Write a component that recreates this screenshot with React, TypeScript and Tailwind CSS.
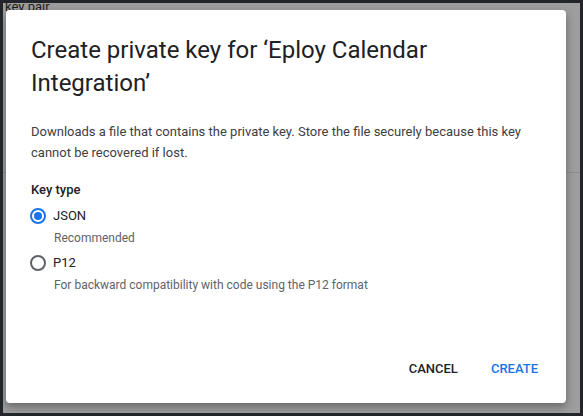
import { useState } from 'react'

type KeyType = 'json' | 'p12'

const options: { id: KeyType; label: string; hint: string }[] = [
  { id: 'json', label: 'JSON', hint: 'Recommended' },
  { id: 'p12', label: 'P12', hint: 'For backward compatibility with code using the P12 format' },
]

function Radio({ checked }: { checked: boolean }) {
  return (
    <span
      className={`ml-[-1px] flex h-[16px] w-[16px] shrink-0 items-center justify-center rounded-full border-2 ${
        checked ? 'border-[#1a73e8]' : 'border-[#5f6368]'
      }`}
    >
      {checked && <span className="h-[8px] w-[8px] rounded-full bg-[#1a73e8]" />}
    </span>
  )
}

export default function App() {
  const [keyType, setKeyType] = useState<KeyType>('json')

  return (
    <div className="h-[416px] w-[583px] bg-[#22262b] p-[3px] font-['Roboto',sans-serif]">
      <div className="relative h-full w-full overflow-hidden bg-[#9e9e9e] pb-[10px] pl-[3px] pr-[14px] pt-[7px]">
        {/* page content behind the overlay */}
        <div className="absolute left-[2px] top-[-4px] text-[13px] leading-[16px] text-[#1d1d1d]">key pair</div>
        <div className="absolute left-0 right-0 top-[169px] h-px bg-[#8e8e8e]" />

        <div className="relative flex h-full flex-col rounded-[4px] bg-white px-[25px] pb-[16px] pt-[24px] shadow-[0_4px_10px_rgba(0,0,0,0.35)]">
          <h2 className="text-[24px] leading-[33px] text-[#202124]">
            Create private key for ‘Eploy Calendar Integration’
          </h2>

          <p className="mt-[21px] pr-[20px] text-[13px] leading-[21px] text-[#3c4043]">
            Downloads a file that contains the private key. Store the file securely because this key
            cannot be recovered if lost.
          </p>

          <div className="mt-[17px] text-[13px] font-medium leading-[20px] text-[#202124]">Key type</div>

          <div className="mt-[4px] flex flex-col">
            {options.map((o, i) => (
              <label
                key={o.id}
                className={`flex cursor-pointer flex-col ${i > 0 ? 'mt-[5px]' : ''}`}
                onClick={() => setKeyType(o.id)}
              >
                <div className="flex h-[24px] items-center gap-[7px]">
                  <Radio checked={keyType === o.id} />
                  <span className="text-[13px] text-[#202124]">{o.label}</span>
                </div>
                <span className="mt-[2px] pl-[23px] text-[12px] leading-[16px] text-[#5f6368]">{o.hint}</span>
              </label>
            ))}
          </div>

          <div className="mt-auto flex justify-end gap-[17px]">
            <button className="h-[36px] px-[8px] text-[13px] font-medium text-[#202124]">CANCEL</button>
            <button className="mr-[-5px] h-[36px] px-[8px] text-[13px] font-medium text-[#1a73e8]">CREATE</button>
          </div>
        </div>
      </div>
    </div>
  )
}
